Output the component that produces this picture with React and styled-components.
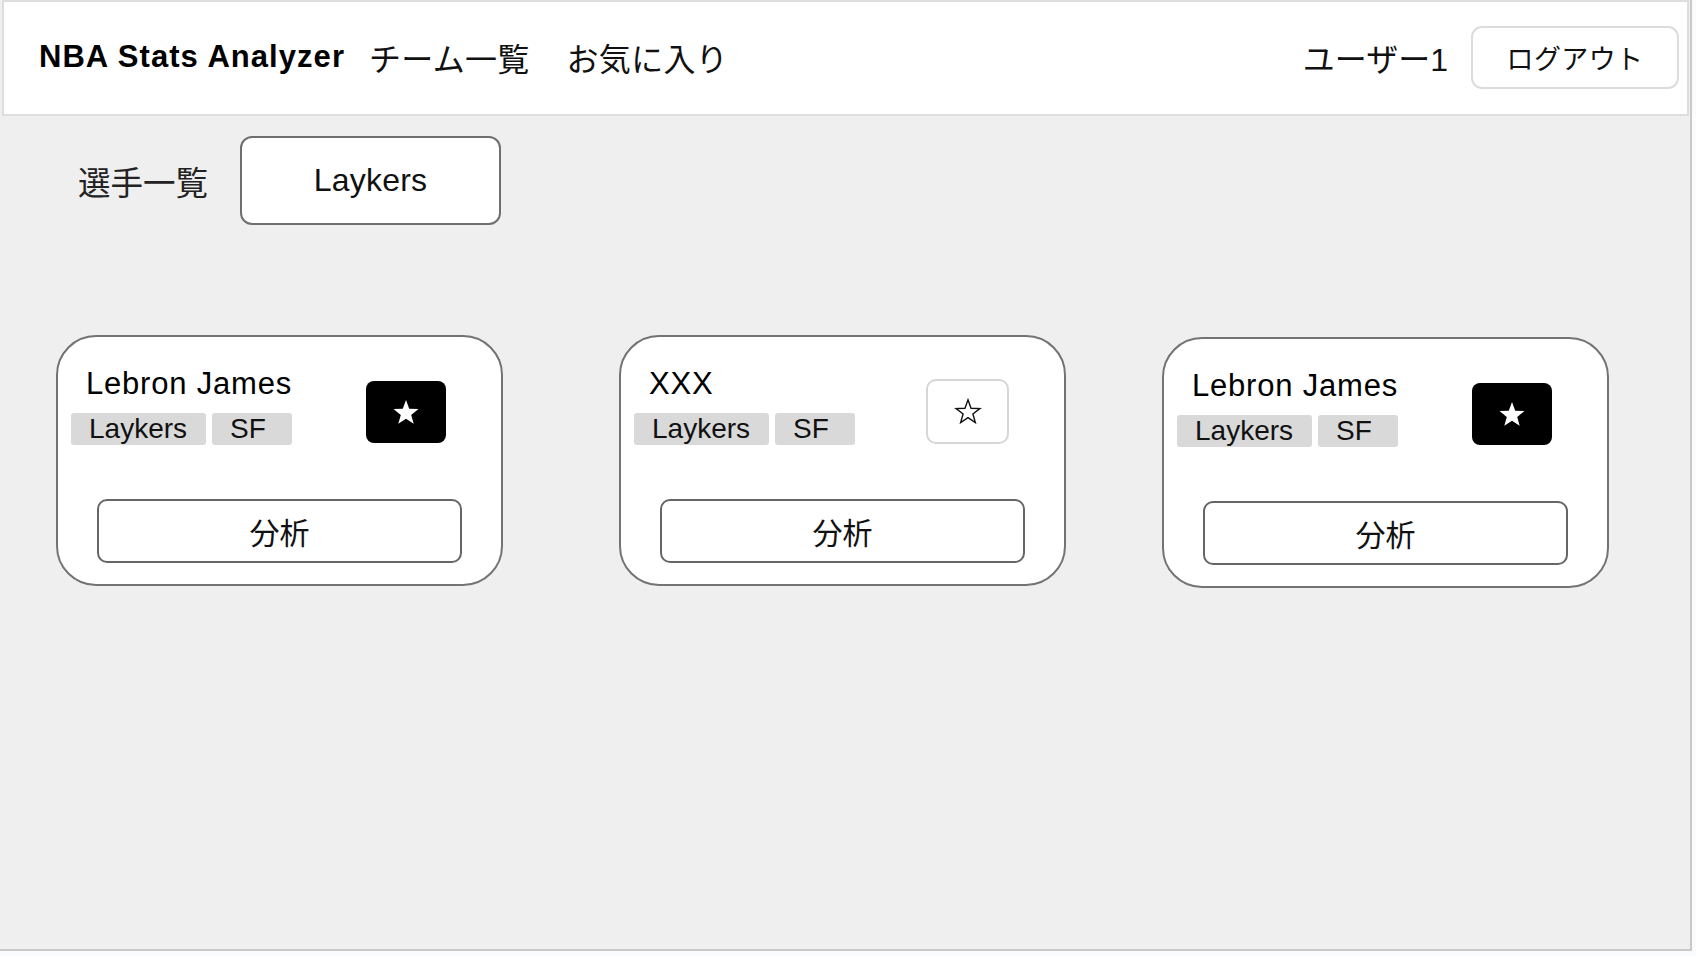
import React from "react";
import styled, { createGlobalStyle } from "styled-components";

const GlobalStyle = createGlobalStyle`
  html, body { margin: 0; padding: 0; background: #fafbfc; }
  body {
    font-family: "Liberation Sans", "Noto Sans CJK JP", Arial, sans-serif;
    color: #000;
  }
  * { box-sizing: border-box; }
`;

const Frame = styled.div`
  width: 1692px;
  height: 951px;
  background: #efefef;
  border-right: 2px solid #c9c9c9;
  border-bottom: 2px solid #c9c9c9;
  display: flex;
  flex-direction: column;
`;

const Header = styled.header`
  margin-left: 2px;
  width: 1687px;
  height: 116px;
  flex: none;
  background: #fff;
  border: 2px solid #dedede;
  display: flex;
  align-items: center;
  padding: 0 8px 2px 35px;
`;

const Logo = styled.div`
  font-size: 31px;
  font-weight: 700;
  letter-spacing: 1.05px;
  white-space: nowrap;
`;

const Nav = styled.nav`
  display: flex;
  align-items: center;
  gap: 37px;
  margin-left: 24px;
`;

const NavLink = styled.a`
  font-size: 32px;
  letter-spacing: 0.3px;
  color: #111;
  text-decoration: none;
  white-space: nowrap;
`;

const Spacer = styled.div`
  flex: 1;
`;

const UserName = styled.span`
  font-size: 32px;
  color: #111;
  margin-right: 23px;
  white-space: nowrap;
`;

const LogoutButton = styled.button`
  width: 208px;
  height: 63px;
  background: #fff;
  border: 2px solid #dcdcdc;
  border-radius: 11px;
  font-family: inherit;
  font-size: 27px;
  letter-spacing: 0.4px;
  color: #111;
`;

const Toolbar = styled.div`
  display: flex;
  align-items: center;
  gap: 32px;
  margin-top: 20px;
  padding-left: 78px;
`;

const PageTitle = styled.h1`
  margin: 0;
  font-size: 32.5px;
  font-weight: 400;
  color: #222;
`;

const TeamSelect = styled.div`
  width: 261px;
  height: 89px;
  background: #fff;
  border: 2px solid #6f6f6f;
  border-radius: 12px;
  display: flex;
  align-items: center;
  justify-content: center;
  font-size: 32px;
  letter-spacing: 0.2px;
  color: #111;
`;

const CardRow = styled.div`
  display: flex;
  align-items: flex-start;
  margin-top: 110px;
  padding-left: 56px;
`;

const Card = styled.div`
  width: 447px;
  height: 251px;
  background: #fff;
  border: 2px solid #737373;
  border-radius: 40px;
  display: flex;
  flex-direction: column;
`;

const TopRow = styled.div`
  display: flex;
  align-items: flex-start;
  padding: 29px 55px 0 13px;
`;

const Info = styled.div`
  flex: 1;
  display: flex;
  flex-direction: column;
`;

const PlayerName = styled.div`
  font-size: 31px;
  line-height: 36px;
  letter-spacing: 0.8px;
  padding-left: 15px;
  white-space: nowrap;
`;

const Tags = styled.div`
  display: flex;
  gap: 6px;
  margin-top: 11px;
`;

const Tag = styled.span`
  height: 32px;
  min-width: 80px;
  padding: 0 19px 0 18px;
  background: #d9d9d9;
  border-radius: 3px;
  font-size: 28px;
  line-height: 32px;
  text-align: left;
  color: #111;
`;

const FavButton = styled.button`
  width: ${(p) => (p.$active ? "80px" : "83px")};
  height: ${(p) => (p.$active ? "62px" : "65px")};
  margin-top: ${(p) => (p.$active ? "15px" : "13px")};
  background: ${(p) => (p.$active ? "#000" : "#fff")};
  border: ${(p) => (p.$active ? "none" : "2px solid #d6d6d6")};
  border-radius: ${(p) => (p.$active ? "8px" : "10px")};
  display: flex;
  align-items: center;
  justify-content: center;
  padding: 0;
`;

const AnalyzeButton = styled.button`
  width: 365px;
  height: 64px;
  margin: 54px auto 0;
  background: #fff;
  border: 2px solid #666;
  border-radius: 10px;
  font-family: inherit;
  font-size: 30px;
  color: #111;
`;

const StarFilled = () => (
  <svg width="28" height="27" viewBox="0 0 24 23" aria-hidden="true">
    <path
      d="M12 0.8 L14.75 8.3 L22.7 8.6 L16.45 13.55 L18.6 21.2 L12 16.8 L5.4 21.2 L7.55 13.55 L1.3 8.6 L9.25 8.3 Z"
      fill="#fff"
    />
  </svg>
);

const StarOutline = () => (
  <svg width="28" height="27" viewBox="0 0 24 23" aria-hidden="true">
    <path
      d="M12 1.5 L14.6 8.7 L22.2 9 L16.2 13.7 L18.3 21 L12 16.8 L5.7 21 L7.8 13.7 L1.8 9 L9.4 8.7 Z"
      fill="none"
      stroke="#111"
      strokeWidth="1.2"
      strokeLinejoin="miter"
    />
  </svg>
);

const players = [
  { name: "Lebron James", team: "Laykers", pos: "SF", fav: true, ml: 0, mt: 0 },
  { name: "XXX", team: "Laykers", pos: "SF", fav: false, ml: 116, mt: 0 },
  { name: "Lebron James", team: "Laykers", pos: "SF", fav: true, ml: 96, mt: 2 },
];

export default function App() {
  return (
    <>
      <GlobalStyle />
      <Frame>
        <Header>
          <Logo>NBA Stats Analyzer</Logo>
          <Nav>
            <NavLink>チーム一覧</NavLink>
            <NavLink>お気に入り</NavLink>
          </Nav>
          <Spacer />
          <UserName>ユーザー1</UserName>
          <LogoutButton>ログアウト</LogoutButton>
        </Header>

        <Toolbar>
          <PageTitle>選手一覧</PageTitle>
          <TeamSelect>Laykers</TeamSelect>
        </Toolbar>

        <CardRow>
          {players.map((p, i) => (
            <Card key={i} style={{ marginLeft: p.ml, marginTop: p.mt }}>
              <TopRow>
                <Info>
                  <PlayerName>{p.name}</PlayerName>
                  <Tags>
                    <Tag>{p.team}</Tag>
                    <Tag>{p.pos}</Tag>
                  </Tags>
                </Info>
                <FavButton $active={p.fav}>
                  {p.fav ? <StarFilled /> : <StarOutline />}
                </FavButton>
              </TopRow>
              <AnalyzeButton>分析</AnalyzeButton>
            </Card>
          ))}
        </CardRow>
      </Frame>
    </>
  );
}
